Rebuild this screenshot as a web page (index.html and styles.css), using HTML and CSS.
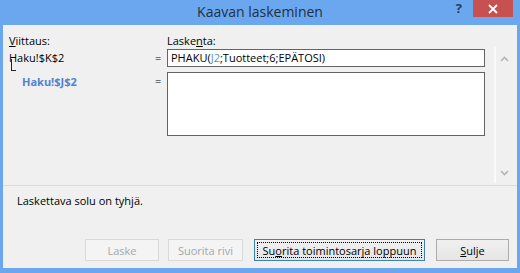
FILE: index.html
```html
<!DOCTYPE html>
<html lang="fi">
<head>
    <meta charset="UTF-8">
    <title>Kaavan laskeminen</title>
    <link rel="stylesheet" href="styles.css">
</head>
<body>
    <div class="window">
        <div class="titlebar">
            <div></div>
            <div class="title">Kaavan laskeminen</div>
            <div class="controls">
                <span class="help">?</span>
                <button class="close" title="Sulje">
                    <svg width="10" height="10" viewBox="0 0 10 10">
                        <path d="M1 1 L9 9 M9 1 L1 9" stroke="#fff" stroke-width="1.8" fill="none"/>
                    </svg>
                </button>
            </div>
        </div>

        <div class="dialog">
            <div class="eval-area">
                <div class="eval-grid">
                    <div class="label"><u>V</u>iittaus:</div>
                    <div></div>
                    <div class="label">Laske<u>n</u>ta:</div>

                    <div class="ref">Haku!$K$2</div>
                    <div class="eq">=</div>
                    <div class="box box-line">PHAKU(<span class="cell-ref">J2</span>;Tuotteet;6;EPÄTOSI)</div>

                    <div class="ref ref-child">
                        <span class="connector"></span>
                        <span class="ref-name">Haku!$J$2</span>
                    </div>
                    <div class="eq">=</div>
                    <div class="box box-area"></div>
                </div>

                <div class="scrollbar">
                    <svg width="9" height="6" viewBox="0 0 9 6"><path d="M1 5 L4.5 1.5 L8 5" stroke="#b4b4b4" stroke-width="1.6" fill="none"/></svg>
                    <svg width="9" height="6" viewBox="0 0 9 6"><path d="M1 1 L4.5 4.5 L8 1" stroke="#b4b4b4" stroke-width="1.6" fill="none"/></svg>
                </div>
            </div>

            <div class="message">Laskettava solu on tyhjä.</div>

            <div class="buttons">
                <button class="btn btn-eval" disabled>Laske</button>
                <button class="btn btn-step" disabled>Suorita rivi</button>
                <button class="btn btn-run focused">Su<u>o</u>rita toimintosarja loppuun</button>
                <button class="btn btn-close"><u>S</u>ulje</button>
            </div>
        </div>
    </div>
</body>
</html>
```

FILE: styles.css
```css
body {
    margin: 0;
    font-family: "Open Sans", "Noto Sans", sans-serif;
    font-size: 11px;
    color: #000;
}

.window {
    width: 520px;
    height: 273px;
    background: #6ba7ee;
    display: flex;
    flex-direction: column;
    padding: 0 3px 5px;
    box-sizing: border-box;
}

/* title bar */
.titlebar {
    height: 25px;
    display: grid;
    grid-template-columns: 1fr auto 1fr;
    align-items: start;
}

.title {
    font-size: 14px;
    line-height: 23px;
    color: #1e3046;
}

.controls {
    display: flex;
    justify-content: flex-end;
    align-items: flex-start;
    padding-right: 4px;
}

.help {
    font-size: 13px;
    font-weight: bold;
    line-height: 15px;
    color: #23405f;
    margin: 1px 11px 0 0;
}

.close {
    width: 40px;
    height: 17px;
    border: none;
    padding: 0;
    background: #c75050;
    display: flex;
    justify-content: center;
    align-items: center;
}

/* dialog body */
.dialog {
    flex: 1;
    background: #f0f0f0;
    display: flex;
    flex-direction: column;
}

.eval-area {
    height: 161px;
    box-sizing: border-box;
    display: flex;
    align-items: flex-start;
    padding: 8px 5px 0 6px;
    border-bottom: 1px solid #dcdcdc;
}

.eval-grid {
    display: grid;
    grid-template-columns: 146px 12px 318px;
    grid-template-rows: 16px 23px 64px;
    line-height: 16px;
}

.ref {
    line-height: 18px;
}

.ref-child {
    display: flex;
    align-items: flex-start;
    line-height: 16px;
}

.connector {
    flex: none;
    width: 4px;
    height: 11px;
    margin: -13px 0 0 2px;
    border-left: 1px solid #222;
    border-bottom: 1px solid #222;
}

.ref-name {
    margin: 2px 0 0 6px;
    color: #4f82d2;
    font-weight: bold;
}

.eq {
    line-height: 18px;
}

.box {
    background: #fff;
    border: 1px solid #646464;
    box-sizing: border-box;
    padding: 0 3px;
}

.box-line {
    height: 18px;
    line-height: 16px;
}

.box-area {
    height: 64px;
}

.cell-ref {
    color: #5b8fd8;
}

.scrollbar {
    width: 18px;
    height: 136px;
    margin: 14px 0 0 9px;
    box-sizing: border-box;
    border-left: 2px solid #fafafa;
    display: flex;
    flex-direction: column;
    justify-content: space-between;
    align-items: center;
    padding: 9px 0 7px;
}

.message {
    padding: 7px 14px 0;
    line-height: 16px;
}

/* buttons */
.buttons {
    margin-top: auto;
    display: flex;
    justify-content: flex-end;
    padding: 0 8px 7px 0;
}

.btn {
    height: 22px;
    padding: 0;
    font-family: inherit;
    font-size: 11px;
    color: #000;
    border: 1px solid #acacac;
    background: linear-gradient(#f0f0f0, #e5e5e5);
    margin-left: 11px;
}

.btn:disabled {
    color: #a6a6a6;
    border-color: #d9d9d9;
    background: #f4f4f4;
}

.btn-eval {
    width: 74px;
}

.btn-step {
    width: 75px;
    margin-left: 9px;
}

.btn-run {
    width: 171px;
}

.btn-close {
    width: 73px;
}

.focused {
    border-color: #3c7fb1;
    outline: 1px dotted #000;
    outline-offset: -4px;
}
```
